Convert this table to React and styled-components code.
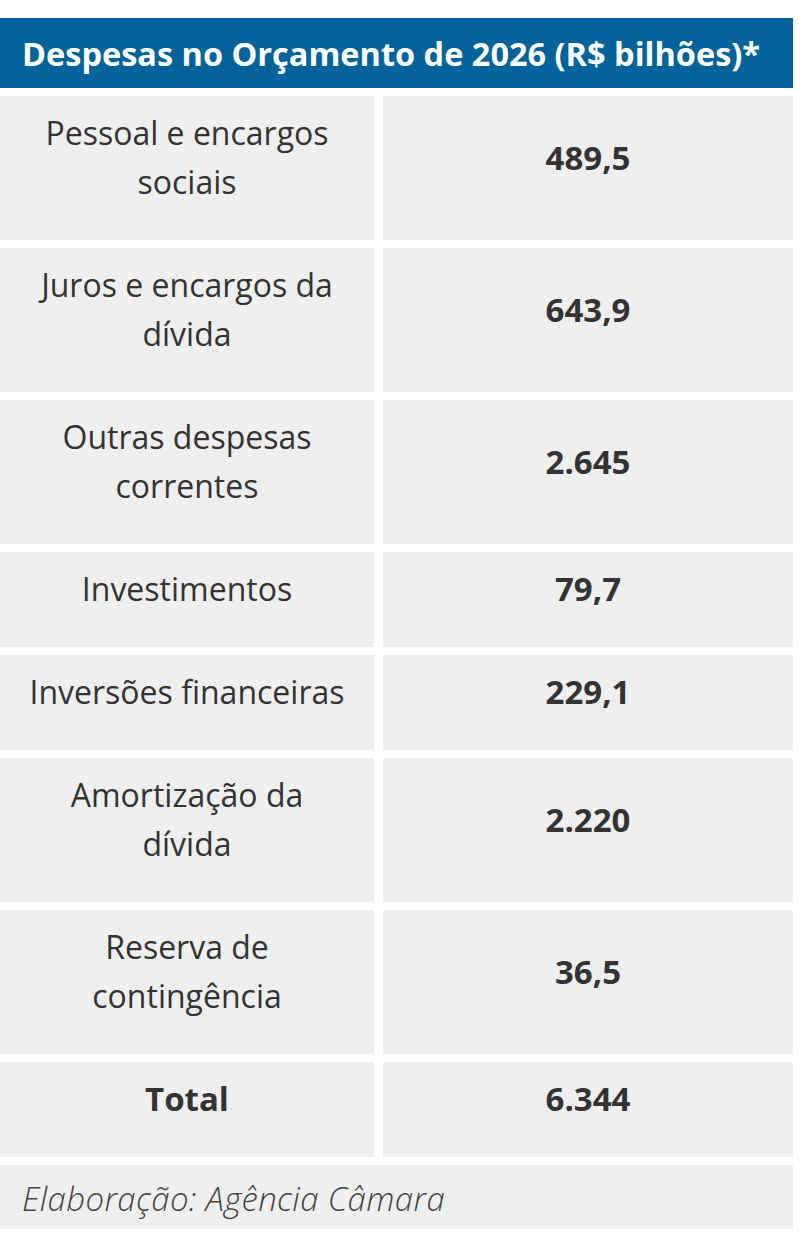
import React from 'react';
import styled, { createGlobalStyle } from 'styled-components';

const Global = createGlobalStyle`
  body {
    margin: 0;
    background: #ffffff;
    font-family: 'Open Sans', 'Noto Sans', sans-serif;
  }
`;

const Frame = styled.section`
  width: 793px;
  padding-top: 18px;
  display: flex;
  flex-direction: column;
  gap: 8px;
`;

const Title = styled.h2`
  margin: 0;
  height: 70px;
  display: flex;
  align-items: center;
  padding-left: 22px;
  background: #02629a;
  color: #ffffff;
  font-size: 32.5px;
  font-weight: 700;
  white-space: nowrap;
`;

const Row = styled.div`
  display: grid;
  grid-template-columns: 374px 1fr;
  column-gap: 9px;
`;

const Cell = styled.div`
  background: #efefef;
  padding: 12px 27px 34px;
  display: flex;
  align-items: center;
  justify-content: center;
  text-align: center;
  color: #333333;
  font-size: ${p => (p.$bold ? '33px' : '32px')};
  line-height: 49px;
  font-weight: ${p => (p.$bold ? 700 : 400)};
`;

const Footer = styled.div`
  background: #efefef;
  height: 61px;
  display: flex;
  align-items: center;
  padding: 3px 0 0 22px;
  color: #444444;
  font-size: 33px;
  font-style: italic;
  font-weight: 300;
  letter-spacing: 0.35px;
`;

const rows = [
  ['Pessoal e encargos sociais', '489,5'],
  ['Juros e encargos da dívida', '643,9'],
  ['Outras despesas correntes', '2.645'],
  ['Investimentos', '79,7'],
  ['Inversões financeiras', '229,1'],
  ['Amortização da dívida', '2.220'],
  ['Reserva de contingência', '36,5'],
];

const App = () => (
  <>
    <Global />
    <Frame>
      <Title>Despesas no Orçamento de 2026 (R$ bilhões)*</Title>
      {rows.map(([label, value]) => (
        <Row key={label}>
          <Cell>{label}</Cell>
          <Cell $bold>{value}</Cell>
        </Row>
      ))}
      <Row>
        <Cell $bold>Total</Cell>
        <Cell $bold>6.344</Cell>
      </Row>
      <Footer>Elaboração: Agência Câmara</Footer>
    </Frame>
  </>
);

export default App;
